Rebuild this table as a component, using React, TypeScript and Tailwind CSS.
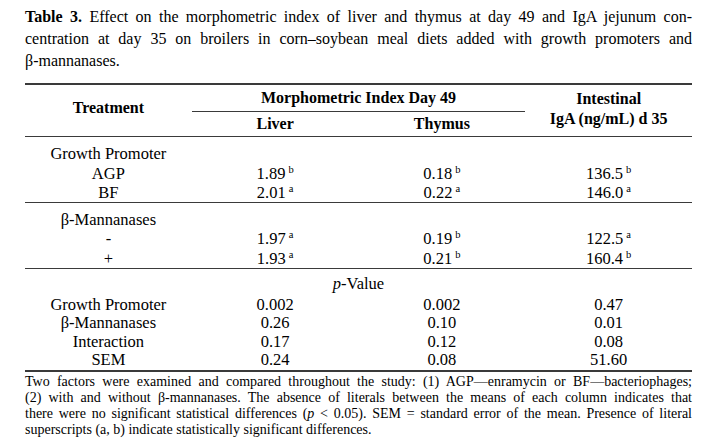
import React from 'react';

type Cell = { v: string; s?: string };

const Val = ({ c }: { c: Cell }) => (
  <span>
    {c.v}
    {c.s && <sup className="ml-[3px] text-[10.5px] top-[-6px]">{c.s}</sup>}
  </span>
);

const Row = ({ label, cells, h = 'h-[19.5px]' }: { label: React.ReactNode; cells: Cell[]; h?: string }) => (
  <div className={`grid grid-cols-4 ${h} items-center text-center`}>
    <div>{label}</div>
    {cells.map((c, i) => (
      <div key={i}>
        <Val c={c} />
      </div>
    ))}
  </div>
);

const App = () => {
  const titleLines = [
    'Effect on the morphometric index of liver and thymus at day 49 and IgA jejunum con-',
    'centration at day 35 on broilers in corn–soybean meal diets added with growth promoters and',
  ];
  const footLines = [
    'Two factors were examined and compared throughout the study: (1) AGP—enramycin or BF—bacteriophages;',
    '(2) with and without β-mannanases. The absence of literals between the means of each column indicates that',
  ];

  return (
    <div className="w-[709px] h-[442px] bg-white overflow-hidden pl-[25px] pr-[17px] text-black font-['Liberation_Serif',serif]">
      {/* Caption */}
      <div className="pt-[6px] text-[16px] leading-[22px]">
        <div className="text-justify [text-align-last:justify]">
          <span className="font-bold">Table 3.</span> {titleLines[0]}
        </div>
        <div className="text-justify [text-align-last:justify]">{titleLines[1]}</div>
        <div>β-mannanases.</div>
      </div>

      {/* Table */}
      <div className="mt-[11px] text-[16.5px]">
        {/* Header */}
        <div className="border-t-2 border-b border-[#3a3a3a] grid grid-cols-4 h-[54px] font-bold text-[16px]">
          <div className="flex items-center justify-center pb-[5px]">Treatment</div>
          <div className="col-span-2 flex flex-col">
            <div className="h-[27px] flex items-center justify-center border-b border-[#3a3a3a]">
              Morphometric Index Day 49
            </div>
            <div className="grid grid-cols-2 flex-1 items-center text-center">
              <div>Liver</div>
              <div>Thymus</div>
            </div>
          </div>
          <div className="flex flex-col items-center justify-center leading-[20px] pb-[4px]">
            <div>Intestinal</div>
            <div>IgA (ng/mL) d 35</div>
          </div>
        </div>

        {/* Growth promoter */}
        <div className="pt-[5px] pb-[1px] border-b border-[#3a3a3a]">
          <Row label="Growth Promoter" cells={[{ v: '' }, { v: '' }, { v: '' }]} />
          <Row label="AGP" cells={[{ v: '1.89', s: 'b' }, { v: '0.18', s: 'b' }, { v: '136.5', s: 'b' }]} />
          <Row label="BF" cells={[{ v: '2.01', s: 'a' }, { v: '0.22', s: 'a' }, { v: '146.0', s: 'a' }]} />
        </div>

        {/* Mannanases */}
        <div className="pt-[5px] pb-[2px] border-b border-[#3a3a3a]">
          <Row label="β-Mannanases" cells={[{ v: '' }, { v: '' }, { v: '' }]} />
          <Row label="-" cells={[{ v: '1.97', s: 'a' }, { v: '0.19', s: 'b' }, { v: '122.5', s: 'a' }]} />
          <Row label="+" cells={[{ v: '1.93', s: 'a' }, { v: '0.21', s: 'b' }, { v: '160.4', s: 'b' }]} />
        </div>

        {/* p-Value */}
        <div className="pt-[6px] pb-[4px] border-b-2 border-[#3a3a3a]">
          <div className="h-[18px] flex items-center justify-center">
            <span>
              <i>p</i>-Value
            </span>
          </div>
          <Row h="h-[18.3px]" label="Growth Promoter" cells={[{ v: '0.002' }, { v: '0.002' }, { v: '0.47' }]} />
          <Row h="h-[18.3px]" label="β-Mannanases" cells={[{ v: '0.26' }, { v: '0.10' }, { v: '0.01' }]} />
          <Row h="h-[18.3px]" label="Interaction" cells={[{ v: '0.17' }, { v: '0.12' }, { v: '0.08' }]} />
          <Row h="h-[18.3px]" label="SEM" cells={[{ v: '0.24' }, { v: '0.08' }, { v: '51.60' }]} />
        </div>
      </div>

      {/* Footnote */}
      <div className="pt-[2px] text-[14px] leading-[16px]">
        <div className="text-justify [text-align-last:justify]">{footLines[0]}</div>
        <div className="text-justify [text-align-last:justify]">{footLines[1]}</div>
        <div className="text-justify [text-align-last:justify]">
          there were no significant statistical differences (<i>p</i> &lt; 0.05). SEM = standard error of the mean. Presence of literal
        </div>
        <div>superscripts (a, b) indicate statistically significant differences.</div>
      </div>
    </div>
  );
};

export default App;
